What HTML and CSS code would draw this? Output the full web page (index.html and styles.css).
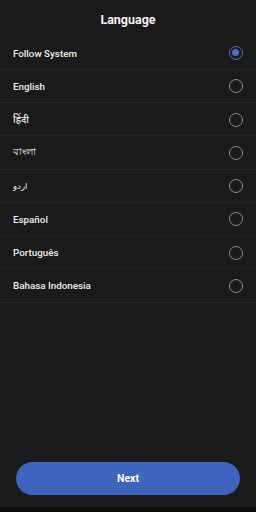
FILE: index.html
```html
<!DOCTYPE html>
<html lang="en">
<head>
    <meta charset="UTF-8">
    <meta name="viewport" content="width=device-width, initial-scale=1.0">
    <title>Language</title>
    <link rel="stylesheet" href="styles.css">
</head>
<body>

<div class="screen">
    <h2 class="title">Language</h2>

    <ul class="lang-list">
        <li class="lang-item selected"><span class="lang-name">Follow System</span><span class="radio"></span></li>
        <li class="lang-item"><span class="lang-name">English</span><span class="radio"></span></li>
        <li class="lang-item"><span class="lang-name">हिंदी</span><span class="radio"></span></li>
        <li class="lang-item"><span class="lang-name">বাংলা</span><span class="radio"></span></li>
        <li class="lang-item"><span class="lang-name urdu">اردو</span><span class="radio"></span></li>
        <li class="lang-item"><span class="lang-name">Español</span><span class="radio"></span></li>
        <li class="lang-item"><span class="lang-name">Português</span><span class="radio"></span></li>
        <li class="lang-item"><span class="lang-name">Bahasa Indonesia</span><span class="radio"></span></li>
    </ul>

    <div class="footer">
        <button type="button" class="next-button">Next</button>
    </div>
</div>
<div class="nav-strip"></div>

</body>
</html>
```

FILE: styles.css
```css
html, body {
    margin: 0;
    padding: 0;
    background-color: #0b0b0b;
}
body {
    font-family: Roboto, "Noto Sans", sans-serif;
    color: #f2f2f2;
}
.screen {
    height: 507px;
    background-color: #1a1a1a;
    display: flex;
    flex-direction: column;
}
.title {
    margin: 0;
    height: 36.5px;
    line-height: 40px;
    text-align: center;
    font-size: 12.5px;
    font-weight: bold;
    color: #f5f5f5;
}
.lang-list {
    list-style: none;
    margin: 0;
    padding: 0;
}
.lang-item {
    height: 33.25px;
    box-sizing: border-box;
    border-bottom: 1px solid #232323;
    display: flex;
    align-items: center;
    justify-content: space-between;
    padding: 1px 13px 0 13px;
}
.lang-name {
    font-size: 9.8px;
    font-weight: 500;
    color: #efefef;
}
.lang-name.urdu {
    font-family: "DejaVu Sans", sans-serif;
    font-size: 8.5px;
    font-weight: normal;
}
.radio {
    width: 14px;
    height: 14px;
    box-sizing: border-box;
    border: 1.5px solid #8a8a8a;
    border-radius: 50%;
    position: relative;
}
.selected .radio {
    border-color: #4b6fd2;
}
.selected .radio::after {
    content: "";
    position: absolute;
    left: 2px;
    top: 2px;
    width: 7px;
    height: 7px;
    border-radius: 50%;
    background-color: #4b6fd2;
}
.footer {
    margin-top: auto;
    padding: 0 16px 12px 16px;
}
.next-button {
    width: 100%;
    height: 33px;
    border: none;
    border-radius: 17px;
    background-color: #3f64bf;
    color: white;
    font-family: Roboto, "Noto Sans", sans-serif;
    font-size: 10.5px;
    font-weight: bold;
    cursor: pointer;
}
.nav-strip {
    height: 5px;
    background-color: #0b0b0b;
}
```
